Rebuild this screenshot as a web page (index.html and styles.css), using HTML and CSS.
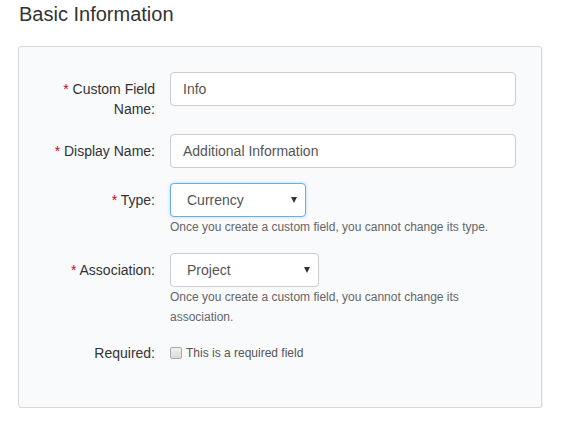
FILE: index.html
```html
<!DOCTYPE html>
<html>
<head>
<meta charset="utf-8">
<link rel="stylesheet" href="styles.css">
</head>
<body>
<h2 class="title">Basic Information</h2>
<div class="panel">
  <div class="form">
    <div class="row">
      <div class="label"><span class="req">*</span> Custom Field<br>Name:</div>
      <div class="control"><div class="input">Info</div></div>
    </div>
    <div class="row">
      <div class="label"><span class="req">*</span> Display Name:</div>
      <div class="control"><div class="input">Additional Information</div></div>
    </div>
    <div class="row">
      <div class="label"><span class="req">*</span> Type:</div>
      <div class="control">
        <div class="select select-type focus"><span>Currency</span><span class="arrow"></span></div>
        <div class="help">Once you create a custom field, you cannot change its type.</div>
      </div>
    </div>
    <div class="row">
      <div class="label"><span class="req">*</span> Association:</div>
      <div class="control">
        <div class="select select-assoc"><span>Project</span><span class="arrow"></span></div>
        <div class="help help-wrap">Once you create a custom field, you cannot change its association.</div>
      </div>
    </div>
    <div class="row row-check">
      <div class="label label-check">Required:</div>
      <div class="control check-line"><span class="checkbox"></span><span class="check-text">This is a required field</span></div>
    </div>
  </div>
</div>
</body>
</html>
```
FILE: styles.css
```css
html, body {
  margin: 0;
  padding: 0;
  background: #ffffff;
  font-family: "Liberation Sans", Arial, sans-serif;
  color: #333333;
}
.title {
  margin: 2px 0 0 19px;
  font-size: 20px;
  line-height: 24px;
  font-weight: normal;
  color: #333333;
}
.panel {
  box-sizing: border-box;
  margin: 20px 0 0 18px;
  width: 524px;
  background: #f9fafc;
  border: 1px solid #d9d9d9;
  border-radius: 3px;
  box-shadow: 1px 1px 1px rgba(0,0,0,0.06);
  padding: 25px 25px 44px 0;
}
.form {
  display: flex;
  flex-direction: column;
  gap: 15px;
}
.row {
  display: grid;
  grid-template-columns: 136px 1fr;
  column-gap: 15px;
  align-items: start;
}
.label {
  text-align: right;
  font-size: 14px;
  line-height: 20px;
  padding-top: 7px;
  color: #333333;
}
.req {
  color: #d0021b;
}
.control {
  display: flex;
  flex-direction: column;
  align-items: flex-start;
}
.input {
  box-sizing: border-box;
  width: 100%;
  height: 34px;
  padding: 0 12px;
  border: 1px solid #cccccc;
  border-radius: 4px;
  background: #ffffff;
  font-size: 14px;
  line-height: 32px;
  color: #555555;
}
.select {
  box-sizing: border-box;
  height: 34px;
  display: flex;
  align-items: center;
  justify-content: space-between;
  padding: 0 8px 0 16px;
  border: 1px solid #cccccc;
  border-radius: 4px;
  background: #ffffff;
  font-size: 14px;
  color: #555555;
}
.select-type {
  width: 136px;
}
.select-assoc {
  width: 149px;
}
.focus {
  border-color: #66afe9;
  box-shadow: 0 0 3px rgba(102,175,233,0.5);
}
.arrow {
  width: 0;
  height: 0;
  border-left: 3px solid transparent;
  border-right: 3px solid transparent;
  border-top: 6px solid #333333;
}
.help {
  font-size: 12px;
  line-height: 20px;
  color: #666666;
  margin-bottom: 1px;
}
.help-wrap {
  width: 300px;
}
.label-check {
  padding-top: 0;
}
.check-line {
  flex-direction: row;
  align-items: center;
  height: 20px;
}
.checkbox {
  box-sizing: border-box;
  width: 12px;
  height: 12px;
  border: 1px solid #a9a9a9;
  border-radius: 2px;
  background: linear-gradient(#f0f0f0, #dcdcdc);
  margin-right: 4px;
}
.check-text {
  font-size: 12px;
  color: #555555;
}
```
